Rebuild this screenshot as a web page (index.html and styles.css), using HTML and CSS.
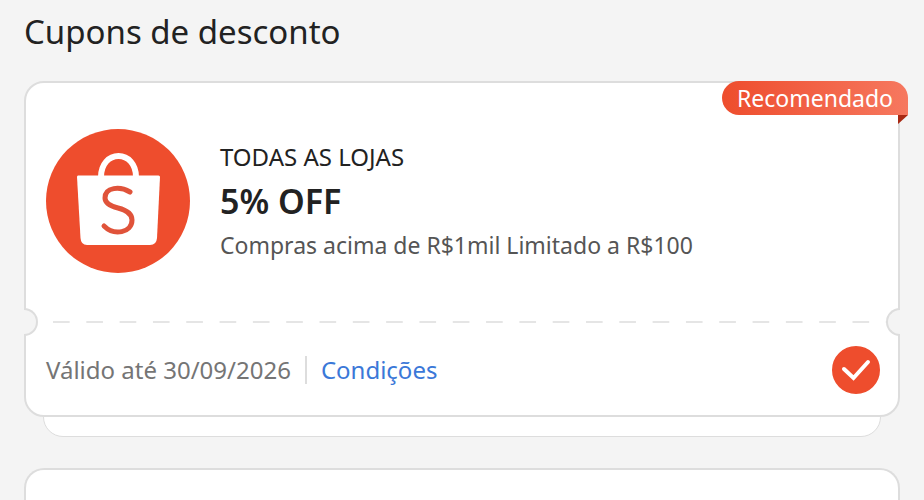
FILE: index.html
```
<!DOCTYPE html>
<html lang="pt-BR">
<head>
    <meta charset="UTF-8">
    <meta name="viewport" content="width=device-width, initial-scale=1.0">
    <title>Cupons de desconto</title>
    <link rel="stylesheet" href="styles.css">
</head>
<body>
    <main class="container">
        <h1 class="page-title">Cupons de desconto</h1>

        <!-- Coupon -->
        <section class="coupon">
            <span class="badge">Recomendado</span>

            <div class="coupon-body">
                <svg class="coupon-logo" viewBox="0 0 144 144" aria-hidden="true">
                    <circle cx="72" cy="72" r="72" fill="#ee4d2d"/>
                    <path d="M55 48C55 35 63 27 72.500 27S90 35 90 48" fill="none" stroke="#fff" stroke-width="6"/>
                    <path d="M32 46.500H112.500Q114 46.500 114 48L111 109Q110.500 116 104 116H41Q35 116 34.500 109L31 48Q31 46.500 32 46.500Z" fill="#fff"/>
                    <path d="M84 63C74 57 59 58 59 69C59 74 64 77 72 79C80 81 86 84 86 91C86 104 68 107 58 97" fill="none" stroke="#e0533a" stroke-width="5" stroke-linecap="round"/>
                </svg>
                <div class="coupon-info">
                    <p class="coupon-store">TODAS AS LOJAS</p>
                    <h2 class="coupon-value">5% OFF</h2>
                    <p class="coupon-rule">Compras acima de R$1mil Limitado a R$100</p>
                </div>
            </div>

            <div class="divider">
                <span class="notch notch-left"></span>
                <span class="dashes"></span>
                <span class="notch notch-right"></span>
            </div>

            <div class="coupon-footer">
                <span class="validity">Válido até 30/09/2026</span>
                <a href="#condicoes" class="terms">Condições</a>
                <label class="check">
                    <input type="checkbox" class="check-input" aria-label="Usar este cupom" checked>
                    <svg class="check-icon" viewBox="0 0 48 48" aria-hidden="true">
                        <path d="M12 23L21.500 32L36 16" fill="none" stroke="#fff" stroke-width="4" stroke-linecap="round"/>
                    </svg>
                </label>
            </div>
        </section>
        <div class="coupon-stack"></div>

        <!-- Next coupon -->
        <section class="coupon coupon-next"></section>
    </main>
</body>
</html>
```
FILE: styles.css
```
/* General Styling */
* {
    box-sizing: border-box;
}

body {
    font-family: "Noto Sans", sans-serif;
    margin: 0;
    background-color: #f4f4f4;
    color: #222;
}

.container {
    display: flex;
    flex-direction: column;
    height: 100vh;
    padding: 12px 24px 0;
    overflow: hidden;
}

.page-title {
    margin: 0 0 29px;
    font-size: 33px;
    font-weight: 400;
    line-height: 40px;
}

/* Coupon */
.coupon {
    position: relative;
    z-index: 1;
    background-color: #fff;
    border: 2px solid #ddd;
    border-radius: 20px;
}

.coupon-body {
    display: flex;
    align-items: center;
    gap: 30px;
    padding: 46px 20px 48px;
}

.coupon-logo {
    width: 144px;
    height: 144px;
    flex-shrink: 0;
}

.coupon-info p,
.coupon-info h2 {
    margin: 0;
    line-height: 44px;
}

.coupon-info .coupon-store {
    font-size: 24px;
}

.coupon-info .coupon-value {
    font-size: 34px;
    font-weight: 600;
}

.coupon-info .coupon-rule {
    font-size: 23px;
    color: #555;
}

/* Badge */
.badge {
    position: absolute;
    top: -2px;
    right: -10px;
    padding: 0 15px;
    border-radius: 17px 17px 0 17px;
    background: linear-gradient(to right, #ee4d2d, #f6785f);
    color: #fff;
    font-size: 23px;
    line-height: 34px;
}

.badge::after {
    content: "";
    position: absolute;
    top: 100%;
    right: 0;
    border-top: 9px solid #a82812;
    border-right: 10px solid transparent;
}

/* Divider */
.divider {
    display: flex;
    align-items: center;
    justify-content: space-between;
    margin: -13px -2px;
}

.notch {
    width: 14px;
    height: 28px;
    border: 2px solid #ddd;
    background-color: #f4f4f4;
}

.notch-left {
    border-left: none;
    border-radius: 0 14px 14px 0;
}

.notch-right {
    border-right: none;
    border-radius: 14px 0 0 14px;
}

.dashes {
    flex: 1;
    height: 2px;
    margin-left: 15px;
    background: linear-gradient(to right, #e5e5e5 50%, transparent 50%) 0 0 / 33px 2px round;
}

/* Footer */
.coupon-footer {
    display: flex;
    align-items: center;
    padding: 23px 18px 21px 20px;
    font-size: 24px;
    line-height: 28px;
}

.validity {
    padding-right: 14px;
    border-right: 2px solid #ddd;
    color: #757575;
}

.terms {
    margin-left: 14px;
    color: #3b78d8;
    text-decoration: none;
}

.check {
    display: grid;
    margin-left: auto;
    cursor: pointer;
}

.check-input,
.check-icon {
    grid-area: 1 / 1;
    width: 48px;
    height: 48px;
    margin: 0;
}

.check-input {
    appearance: none;
    border: 2px solid #ddd;
    border-radius: 50%;
}

.check-input:checked {
    border-color: #ee4d2d;
    background-color: #ee4d2d;
}

.check-icon {
    pointer-events: none;
}

/* Card behind */
.coupon-stack {
    flex-shrink: 0;
    height: 40px;
    margin: -20px 19px 31px;
    background-color: #fff;
    border: 1px solid #ddd;
    border-radius: 20px;
}

/* Cut off by the bottom of the screen */
.coupon-next {
    flex: 1;
    border-bottom: none;
    border-radius: 20px 20px 0 0;
}
```
